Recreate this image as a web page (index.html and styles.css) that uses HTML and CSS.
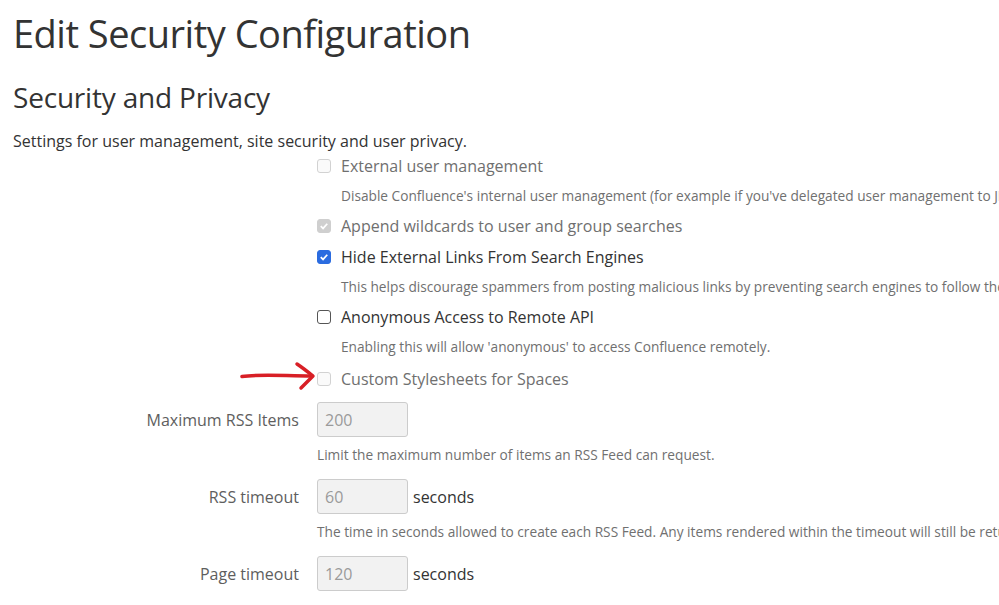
FILE: index.html
```html
<!DOCTYPE html>
<html>
<head>
    <title>Edit Security Configuration</title>
    <link rel="stylesheet" href="styles.css">
</head>
<body>
    <h1>Edit Security Configuration</h1>
    <h2>Security and Privacy</h2>
    <p class="intro">Settings for user management, site security and user privacy.</p>

    <div class="form">
        <!-- checkbox options -->
        <div class="check-row disabled">
            <span class="box"></span>
            <span class="check-label">External user management</span>
        </div>
        <p class="desc">Disable Confluence's internal user management (for example if you've delegated user management to JIRA or Crowd)</p>

        <div class="check-row disabled">
            <span class="box checked">
                <svg viewBox="0 0 14 14"><path d="M3.2 7.2 L5.9 9.8 L10.8 4.4" /></svg>
            </span>
            <span class="check-label">Append wildcards to user and group searches</span>
        </div>

        <div class="check-row">
            <span class="box checked">
                <svg viewBox="0 0 14 14"><path d="M3.2 7.2 L5.9 9.8 L10.8 4.4" /></svg>
            </span>
            <span class="check-label">Hide External Links From Search Engines</span>
        </div>
        <p class="desc">This helps discourage spammers from posting malicious links by preventing search engines to follow them.</p>

        <div class="check-row">
            <span class="box"></span>
            <span class="check-label">Anonymous Access to Remote API</span>
        </div>
        <p class="desc">Enabling this will allow 'anonymous' to access Confluence remotely.</p>

        <div class="check-row disabled marked">
            <span class="box"></span>
            <span class="check-label">Custom Stylesheets for Spaces</span>
            <svg class="arrow" viewBox="0 0 80 34">
                <path d="M2 17.5 C 20 15, 45 17, 72 17" />
                <path d="M57 5 C 63 9, 68 13, 73 17 C 69 21, 65 25, 61 29" />
            </svg>
        </div>

        <!-- text fields -->
        <div class="field-row first">
            <label class="field-label">Maximum RSS Items</label>
            <input class="text" type="text" value="200" disabled>
        </div>
        <p class="desc">Limit the maximum number of items an RSS Feed can request.</p>

        <div class="field-row">
            <label class="field-label">RSS timeout</label>
            <input class="text" type="text" value="60" disabled>
            <span class="unit">seconds</span>
        </div>
        <p class="desc">The time in seconds allowed to create each RSS Feed. Any items rendered within the timeout will still be returned.</p>

        <div class="field-row">
            <label class="field-label">Page timeout</label>
            <input class="text" type="text" value="120" disabled>
            <span class="unit">seconds</span>
        </div>
    </div>
</body>
</html>
```

FILE: styles.css
```css
body {
  font-family: "Open Sans", Arial, sans-serif;
  background-color: #fff;
  color: #333;
  margin: 0;
  padding: 0 0 0 13px;
  overflow: hidden;
  white-space: nowrap;
}
h1 {
  font-size: 38px;
  font-weight: 400;
  color: #333;
  margin: 0;
  padding-top: 8px;
  line-height: 50px;
  letter-spacing: -0.5px;
}
h2 {
  font-size: 28px;
  font-weight: 400;
  color: #333;
  margin: 19px 0 0;
  line-height: 40px;
  letter-spacing: -0.2px;
}
.intro {
  font-size: 16px;
  margin: 15px 0 0;
  line-height: 18px;
}
.check-row {
  display: flex;
  align-items: center;
  height: 31px;
  padding-left: 304px;
  position: relative;
}
.check-row.marked {
  margin-top: 2px;
}
.check-label {
  font-size: 16px;
  margin-left: 10px;
  color: #333;
}
.disabled .check-label {
  color: #6f6f6f;
}
.box {
  width: 12px;
  height: 12px;
  border: 1px solid #555;
  border-radius: 3px;
  background: #fff;
  display: flex;
  align-items: center;
  justify-content: center;
}
.box svg {
  width: 14px;
  height: 14px;
  fill: none;
  stroke: #fff;
  stroke-width: 2;
}
.box.checked {
  background: #2b6ce0;
  border-color: #2b6ce0;
}
.disabled .box {
  border-color: #d2d2d2;
  background: #fafafa;
}
.disabled .box.checked {
  background: #cfcfcf;
  border-color: #cfcfcf;
}
.desc {
  font-size: 13.7px;
  color: #707070;
  margin: 0;
  line-height: 27px;
  padding: 1px 0 1px 328px;
}
.field-row + .desc {
  padding: 0 0 0 304px;
  line-height: 36px;
}
.field-row {
  display: flex;
  align-items: center;
  margin-top: 6px;
}
.field-row.first {
  margin-top: 8px;
}
.field-label {
  width: 286px;
  text-align: right;
  font-size: 16px;
  color: #5e5e5e;
  margin-right: 18px;
}
.text {
  box-sizing: border-box;
  width: 91px;
  height: 35px;
  border: 1px solid #ccc;
  border-radius: 3px;
  background: #f2f2f2;
  color: #9a9a9a;
  font-family: inherit;
  font-size: 16px;
  padding: 0 7px;
  margin: 0;
}
.unit {
  font-size: 16px;
  margin-left: 5px;
  color: #333;
}
.arrow {
  position: absolute;
  left: 227px;
  top: -4px;
  width: 80px;
  height: 34px;
  fill: none;
  stroke: #d81f26;
  stroke-width: 3.5;
  stroke-linecap: round;
  stroke-linejoin: round;
}
```
